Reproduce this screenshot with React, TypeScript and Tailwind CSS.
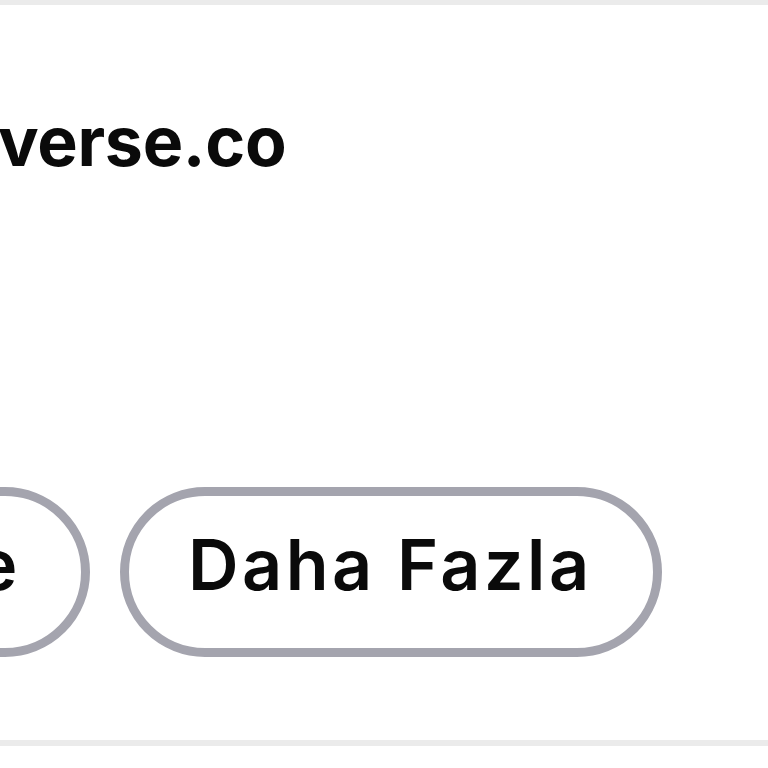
import React from 'react';

const font = { fontFamily: 'Inter, "Noto Sans", sans-serif' };

const Pill: React.FC<{ label: string }> = ({ label }) => (
    <button className="shrink-0 h-[170px] rounded-full border-[9px] border-[#a4a4ae] bg-white pl-[59px] pr-[60px] flex items-center">
        <span className="text-[70px] font-semibold text-[#0a0a0a] tracking-[3.5px] leading-none mb-[14px] whitespace-nowrap">{label}</span>
    </button>
);

export default function App() {
    return (
        <div className="w-[768px] h-[768px] bg-white overflow-hidden flex flex-col" style={font}>
            {/* top divider */}
            <div className="h-[5px] bg-[#ebebeb] shrink-0" />

            <div className="flex-1 flex flex-col">
                {/* contact line, clipped on the left */}
                <div className="mt-[96px] h-[80px] flex items-center overflow-hidden">
                    <span className="text-[68px] font-bold text-[#0a0a0a] leading-none tracking-[-0.3px] -ml-[2px] whitespace-nowrap">
                        verse.co
                    </span>
                </div>

                {/* actions */}
                <div className="mt-[306px] flex items-center gap-[30px]">
                    <div className="w-[90px] shrink-0 overflow-hidden flex justify-end">
                        <Pill label="İncele" />
                    </div>
                    <Pill label="Daha Fazla" />
                </div>
            </div>

            {/* bottom divider */}
            <div className="h-[6px] bg-[#ebebeb] shrink-0 mb-[22px]" />
        </div>
    );
}
